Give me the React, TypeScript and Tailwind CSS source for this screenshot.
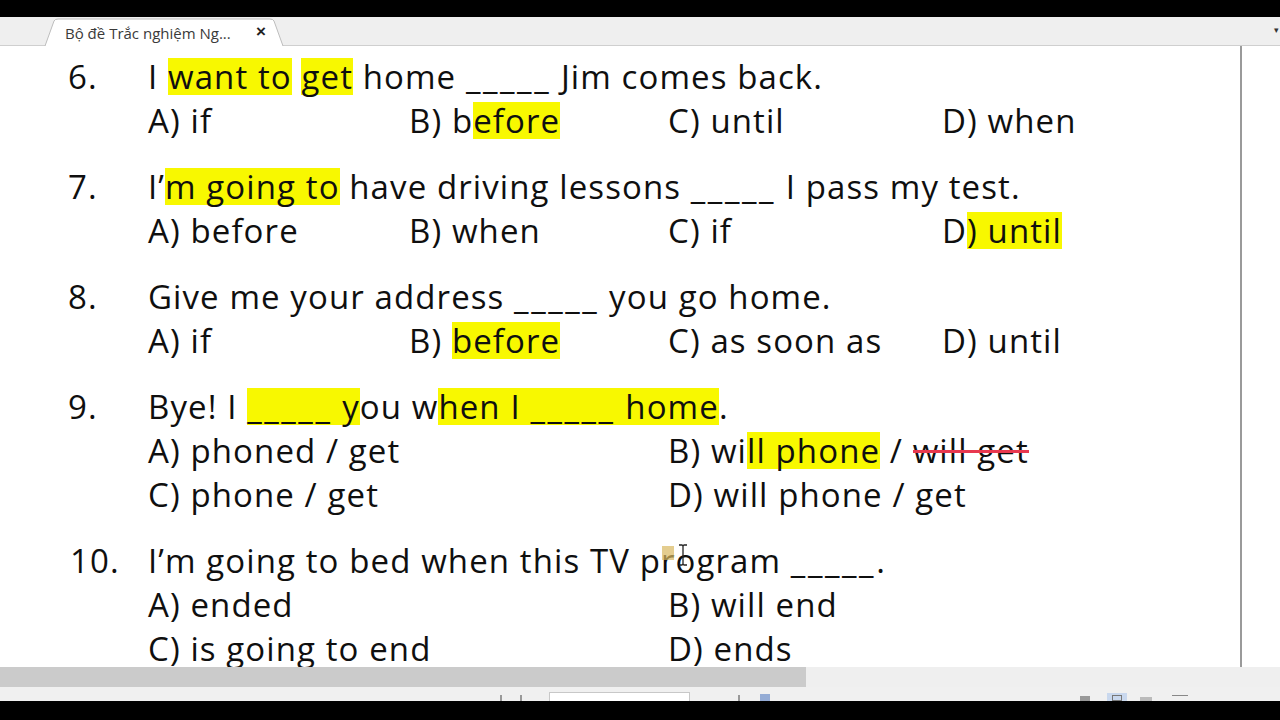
import React from "react";

const H = ({ children }: { children: React.ReactNode }) => (
  <span className="inline-block leading-[37px] bg-[#f8f800]">{children}</span>
);

const U = () => <span className="tracking-[2.6px]">_____</span>;

const Q = ({ n, numX, children }: { n: string; numX?: string; children: React.ReactNode }) => (
  <div className="flex h-[44px] items-center">
    <div className={`w-[80px] shrink-0 ${numX ?? ""}`}>{n}</div>
    <div className="whitespace-pre">{children}</div>
  </div>
);

const Opts4 = ({ a, b, c, d }: { a: React.ReactNode; b: React.ReactNode; c: React.ReactNode; d: React.ReactNode }) => (
  <div className="flex h-[44px] items-center pl-[80px] whitespace-pre">
    <div className="w-[261px] shrink-0">{a}</div>
    <div className="w-[259px] shrink-0">{b}</div>
    <div className="w-[274px] shrink-0">{c}</div>
    <div>{d}</div>
  </div>
);

const Opts2 = ({ a, b }: { a: React.ReactNode; b: React.ReactNode }) => (
  <div className="flex h-[44px] items-center pl-[80px] whitespace-pre">
    <div className="w-[520px] shrink-0">{a}</div>
    <div>{b}</div>
  </div>
);

export default function App() {
  return (
    <div className="w-[1280px] h-[720px] bg-black flex flex-col overflow-hidden">
      <div className="h-[17px] shrink-0 bg-black" />
      {/* tab bar */}
      <div className="h-[29px] shrink-0 bg-[#efefef] relative border-b border-[#cfcfcf]">
        <svg className="absolute left-0 top-0" width="300" height="29" viewBox="0 0 300 29">
          <path d="M45 29 L54 4 Q55 2 58 2 L270 2 Q273 2 274 4 L283 29" fill="#ffffff" stroke="#bdbdbd" strokeWidth="1" />
        </svg>
        <div className="absolute left-[65px] top-[8px] text-[15px] leading-[16px] text-[#3a3a3a] font-['Open_Sans',sans-serif]">
          Bộ đề Trắc nghiệm Ng...
        </div>
        <div className="absolute left-[256px] top-[7px] text-[17px] leading-[16px] text-[#222] font-bold font-['Liberation_Sans',sans-serif]">
          ×
        </div>
        <div className="absolute right-[1px] top-[6px] text-[9px] text-[#333]">▾</div>
      </div>
      {/* content */}
      <div className="h-[621px] shrink-0 bg-white flex">
        <div className="w-[1240px] shrink-0 pt-[9px] pl-[68px] text-[33px] leading-[44px] tracking-[1.1px] text-[#0f0f0f] font-['Open_Sans',sans-serif]">
          <div className="flex flex-col gap-[22px]">
            <div>
              <Q n="6.">
                I <H>want to</H> <H>get</H> home <U /> Jim comes back.
              </Q>
              <Opts4 a="A) if" b={<>B) b<H>efore</H></>} c="C) until" d="D) when" />
            </div>
            <div>
              <Q n="7.">
                I’<H>m going to</H> have driving lessons <U /> I pass my test.
              </Q>
              <Opts4 a="A) before" b="B) when" c="C) if" d={<>D<H>) until</H></>} />
            </div>
            <div>
              <Q n="8.">Give me your address <U /> you go home.</Q>
              <Opts4 a="A) if" b={<>B) <H>before</H></>} c="C) as soon as" d="D) until" />
            </div>
            <div>
              <Q n="9.">
                Bye! I <H><U /> y</H>ou w<H>hen I <U /> home</H>.
              </Q>
              <Opts2
                a="A) phoned / get"
                b={
                  <>
                    B) wi<H>ll phone</H> /{" "}
                    <span className="relative">
                      will get
                      <span className="absolute left-0 right-0 top-[22px] h-[3px] bg-[#e8384f]" />
                    </span>
                  </>
                }
              />
              <Opts2 a="C) phone / get" b="D) will phone / get" />
            </div>
            <div>
              <Q n="10." numX="ml-[2px] -mr-[2px]">
                I’m going to bed when this TV pr
                <span className="relative">
                  o
                  <span className="absolute left-[-14px] top-[8px] w-[12px] h-[14px] bg-[#d9b860] opacity-70" />
                  <svg className="absolute left-[2px] top-[6px]" width="10" height="22" viewBox="0 0 10 22">
                    <path d="M1 1 H4 Q5 1 5 3 V19 Q5 21 4 21 H1 M9 1 H6 Q5 1 5 3 M5 19 Q5 21 6 21 H9" fill="none" stroke="#222" strokeWidth="1.3" />
                  </svg>
                </span>
                gram <U />.
              </Q>
              <Opts2 a="A) ended" b="B) will end" />
              <Opts2 a="C) is going to end" b="D) ends" />
            </div>
          </div>
        </div>
        <div className="w-[2px] shrink-0 bg-[#9a9a9a]" />
        <div className="flex-1 bg-white" />
      </div>
      {/* horizontal scrollbar */}
      <div className="h-[20px] shrink-0 flex bg-[#efefef]">
        <div className="w-[806px] h-[20px] bg-[#cbcbcb]" />
      </div>
      {/* status bar */}
      <div className="h-[14px] shrink-0 bg-[#f0f0f0] relative">
        <div className="absolute left-[549px] top-[5px] w-[141px] h-[9px] bg-white border border-[#c8c8c8] border-b-0" />
        <div className="absolute left-[500px] top-[8px] w-[2px] h-[6px] bg-[#999]" />
        <div className="absolute left-[520px] top-[8px] w-[2px] h-[6px] bg-[#999]" />
        <div className="absolute left-[738px] top-[8px] w-[2px] h-[6px] bg-[#999]" />
        <div className="absolute left-[760px] top-[7px] w-[10px] h-[7px] bg-[#6d8fc9] opacity-70" />
        <div className="absolute left-[1080px] top-[9px] w-[10px] h-[5px] bg-[#999]" />
        <div className="absolute left-[1107px] top-[6px] w-[20px] h-[8px] bg-[#c9d8ee]" />
        <div className="absolute left-[1112px] top-[8px] w-[10px] h-[6px] border border-[#777]" />
        <div className="absolute left-[1140px] top-[10px] w-[12px] h-[4px] bg-[#bbb]" />
        <div className="absolute left-[1172px] top-[8px] w-[16px] h-[6px] border-t border-[#888]" />
      </div>
      <div className="flex-1 bg-black" />
    </div>
  );
}
